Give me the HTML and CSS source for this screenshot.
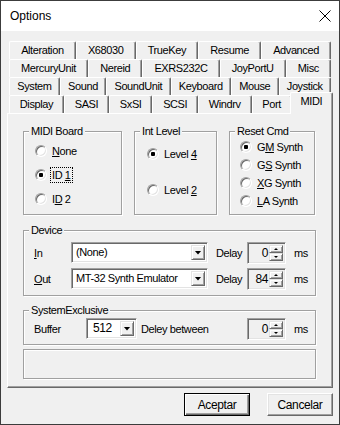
FILE: index.html
```html
<!DOCTYPE html>
<html lang="en">
<head>
    <meta charset="UTF-8">
    <title>Options</title>
    <link rel="stylesheet" href="styles.css">
</head>
<body>
    <div class="window">
        <div class="titlebar">
            <span class="title">Options</span>
            <svg class="close" width="12" height="12" viewBox="0 0 12 12">
                <path d="M0.5 0.5L11.5 11.5M11.5 0.5L0.5 11.5" stroke="#000" stroke-width="1"/>
            </svg>
        </div>

        <div class="client">
            <div class="tabs">
                <div class="tabrow">
                    <div class="tab">Alteration</div>
                    <div class="tab">X68030</div>
                    <div class="tab">TrueKey</div>
                    <div class="tab">Resume</div>
                    <div class="tab">Advanced</div>
                </div>
                <div class="tabrow">
                    <div class="tab">MercuryUnit</div>
                    <div class="tab">Nereid</div>
                    <div class="tab">EXRS232C</div>
                    <div class="tab">JoyPortU</div>
                    <div class="tab">Misc</div>
                </div>
                <div class="tabrow">
                    <div class="tab">System</div>
                    <div class="tab">Sound</div>
                    <div class="tab">SoundUnit</div>
                    <div class="tab">Keyboard</div>
                    <div class="tab">Mouse</div>
                    <div class="tab">Joystick</div>
                </div>
                <div class="tabrow">
                    <div class="tab">Display</div>
                    <div class="tab">SASI</div>
                    <div class="tab">SxSI</div>
                    <div class="tab">SCSI</div>
                    <div class="tab">Windrv</div>
                    <div class="tab">Port</div>
                    <div class="tab active">MIDI</div>
                </div>
            </div>

            <div class="panel">
                <div class="groups">
                    <fieldset class="group board">
                        <legend>MIDI Board</legend>
                        <div class="gbody">
                            <div class="opt"><span class="radio"></span><span class="opt-label"><u>N</u>one</span></div>
                            <div class="opt"><span class="radio checked"></span><span class="opt-label focus">ID <u>1</u></span></div>
                            <div class="opt"><span class="radio"></span><span class="opt-label">I<u>D</u> 2</span></div>
                        </div>
                    </fieldset>
                    <fieldset class="group level">
                        <legend>Int Level</legend>
                        <div class="gbody">
                            <div class="opt"><span class="radio checked"></span><span class="opt-label">Level <u>4</u></span></div>
                            <div class="opt"><span class="radio"></span><span class="opt-label">Level <u>2</u></span></div>
                        </div>
                    </fieldset>
                    <fieldset class="group reset">
                        <legend>Reset Cmd</legend>
                        <div class="gbody">
                            <div class="opt"><span class="radio checked"></span><span class="opt-label">G<u>M</u> Synth</span></div>
                            <div class="opt"><span class="radio"></span><span class="opt-label">G<u>S</u> Synth</span></div>
                            <div class="opt"><span class="radio"></span><span class="opt-label"><u>X</u>G Synth</span></div>
                            <div class="opt"><span class="radio"></span><span class="opt-label"><u>L</u>A Synth</span></div>
                        </div>
                    </fieldset>
                </div>

                <fieldset class="group device">
                    <legend>Device</legend>
                    <div class="gbody">
                        <div class="field-row">
                            <span class="lbl"><u>I</u>n</span>
                            <div class="combo wide">
                                <span class="combo-text">(None)</span>
                                <span class="combo-btn"><i class="arrow"></i></span>
                            </div>
                            <span class="delay">Delay</span>
                            <div class="spin">
                                <span class="spin-val">0</span>
                                <span class="spin-btns"><span class="spin-up"></span><span class="spin-down"></span></span>
                            </div>
                            <span class="unit">ms</span>
                        </div>
                        <div class="field-row">
                            <span class="lbl"><u>O</u>ut</span>
                            <div class="combo wide">
                                <span class="combo-text">MT-32 Synth Emulator</span>
                                <span class="combo-btn"><i class="arrow"></i></span>
                            </div>
                            <span class="delay">Delay</span>
                            <div class="spin">
                                <span class="spin-val">84</span>
                                <span class="spin-btns"><span class="spin-up"></span><span class="spin-down"></span></span>
                            </div>
                            <span class="unit">ms</span>
                        </div>
                    </div>
                </fieldset>

                <fieldset class="group sysex">
                    <legend>SystemExclusive</legend>
                    <div class="gbody">
                        <div class="field-row">
                            <span class="lbl buffer">Buffer</span>
                            <div class="combo small">
                                <span class="combo-text">512</span>
                                <span class="combo-btn"><i class="arrow"></i></span>
                            </div>
                            <span class="between">Deley between</span>
                            <div class="spin">
                                <span class="spin-val">0</span>
                                <span class="spin-btns"><span class="spin-up"></span><span class="spin-down"></span></span>
                            </div>
                            <span class="unit">ms</span>
                        </div>
                    </div>
                </fieldset>

                <div class="status"></div>
            </div>

            <div class="buttons">
                <div class="btn default">Aceptar</div>
                <div class="btn">Cancelar</div>
            </div>
        </div>
    </div>
</body>
</html>
```

FILE: styles.css
```css
body {
    margin: 0;
    background: #fff;
    font-family: "Liberation Sans", Arial, sans-serif;
    font-size: 11px;
    letter-spacing: -0.4px;
    color: #000;
}

.window {
    width: 340px;
    height: 425px;
    box-sizing: border-box;
    border: 1px solid #3c3c3c;
    background: #f0f0f0;
    display: flex;
    flex-direction: column;
}

.titlebar {
    height: 30px;
    background: #fff;
    display: flex;
    align-items: center;
    justify-content: space-between;
    padding: 0 8px 0 9px;
}

.title {
    font-size: 12px;
    letter-spacing: 0;
}

.client {
    flex: 1;
    padding: 10px 6px 0;
    display: flex;
    flex-direction: column;
}

/* tabs */
.tabs {
    margin: 0 2px;
}

.tabrow {
    display: flex;
    height: 18px;
}

.tab {
    flex: 1 1 auto;
    padding: 0 4px;
    border: 1px solid;
    border-bottom: 0;
    border-color: #fff #696969 #696969 #fff;
    box-shadow: inset -1px 0 #a0a0a0;
    border-radius: 2px 2px 0 0;
    background: #f0f0f0;
    line-height: 17px;
    text-align: center;
    white-space: nowrap;
}

.tab.active {
    position: relative;
    z-index: 1;
    align-self: flex-start;
    height: 21px;
    margin: -3px -2px 0 -2px;
    line-height: 16px;
}

/* panel */
.panel {
    height: 275px;
    box-sizing: border-box;
    border: 1px solid;
    border-color: #fff #696969 #696969 #fff;
    box-shadow: inset -1px -1px #a0a0a0;
    padding: 11px 16px 0 15px;
    display: flex;
    flex-direction: column;
}

.groups {
    display: flex;
    gap: 12px;
}

fieldset.group {
    margin: 0;
    padding: 0;
    min-width: 0;
    box-sizing: border-box;
    border: 1px solid #a0a0a0;
    box-shadow: inset 1px 1px #fff, 1px 1px #fff;
}

legend {
    margin-left: 5px;
    padding: 0 2px;
    line-height: 13px;
    background: #f0f0f0;
}

.board { width: 99px; }
.level { width: 83px; }
.reset { width: 86px; }

.gbody {
    display: flex;
    flex-direction: column;
}

.board .gbody {
    padding: 5px 0 7px 11px;
    gap: 8px;
}

.level .gbody {
    padding: 8px 0 0 12px;
    gap: 20px;
}

.reset .gbody {
    padding: 1px 0 5px 10px;
    gap: 2px;
}

.opt {
    display: flex;
    align-items: center;
    height: 16px;
}

.radio {
    width: 12px;
    height: 12px;
    box-sizing: border-box;
    border-radius: 50%;
    border: 1px solid;
    border-color: #a0a0a0 #fff #fff #a0a0a0;
    box-shadow: inset 1px 1px #696969, inset -1px -1px #e3e3e3;
    background: #fff;
    flex: none;
}

.radio.checked {
    background: radial-gradient(circle, #000 0, #000 2px, #fff 2.5px);
}

.opt-label {
    margin-left: 5px;
    line-height: 14px;
}

.opt-label.focus {
    margin-left: 3px;
    padding: 0 1px;
    border: 1px dotted #000;
}

/* device + sysex */
fieldset.device {
    margin-top: 9px;
}

.device .gbody {
    padding: 5px 0 6px 10px;
    gap: 5px;
}

fieldset.sysex {
    margin-top: 8px;
}

.sysex .gbody {
    padding: 1px 0 5px 10px;
}

.field-row {
    display: flex;
    align-items: center;
    height: 21px;
}

.lbl {
    width: 37px;
}

.lbl.buffer {
    width: 52px;
}

.combo {
    display: flex;
    box-sizing: border-box;
    height: 21px;
    padding: 2px;
    border: 1px solid;
    border-color: #a0a0a0 #fff #fff #a0a0a0;
    box-shadow: inset 1px 1px #696969, inset -1px -1px #e3e3e3;
    background: #fff;
}

.combo.wide { width: 137px; }
.combo.small { width: 51px; }

.combo-text {
    flex: 1;
    padding-left: 2px;
    line-height: 15px;
    white-space: nowrap;
    overflow: hidden;
}

.combo.small .combo-text {
    padding-left: 4px;
    font-size: 12px;
}

.combo-btn,
.spin-up,
.spin-down {
    box-sizing: border-box;
    border: 1px solid;
    border-color: #e3e3e3 #696969 #696969 #e3e3e3;
    box-shadow: inset 1px 1px #fff, inset -1px -1px #a0a0a0;
    background: #f0f0f0;
    display: flex;
    align-items: center;
    justify-content: center;
}

.combo-btn {
    width: 14px;
}

.arrow {
    width: 7px;
    height: 4px;
    background: #000;
    clip-path: polygon(0 0, 100% 0, 50% 100%);
}

.delay {
    margin-left: 8px;
    width: 31px;
}

.between {
    margin-left: 4px;
    width: 106px;
}

.spin {
    display: flex;
    box-sizing: border-box;
    width: 39px;
    height: 22px;
    padding: 2px;
    border: 1px solid;
    border-color: #a0a0a0 #fff #fff #a0a0a0;
    box-shadow: inset 1px 1px #696969, inset -1px -1px #e3e3e3;
    background: #f0f0f0;
}

.spin-val {
    flex: 1;
    text-align: right;
    line-height: 16px;
    padding-right: 1px;
    font-size: 12px;
}

.spin-btns {
    width: 14px;
    display: flex;
    flex-direction: column;
}

.spin-up,
.spin-down {
    flex: 1;
}

.spin-up::after,
.spin-down::after {
    content: "";
    border-left: 2px solid transparent;
    border-right: 2px solid transparent;
}

.spin-up::after {
    border-bottom: 2px solid #000;
}

.spin-down::after {
    border-top: 2px solid #000;
}

.unit {
    margin-left: 8px;
}

.status {
    margin-top: 4px;
    height: 28px;
    border: 1px solid #a0a0a0;
    box-shadow: inset 1px 1px #fff, 1px 1px #fff;
}

/* dialog buttons */
.buttons {
    display: flex;
    justify-content: flex-end;
    gap: 17px;
    margin-top: 5px;
}

.btn {
    width: 66px;
    height: 23px;
    box-sizing: border-box;
    border: 1px solid;
    border-color: #fff #696969 #696969 #fff;
    box-shadow: inset -1px -1px #a0a0a0, inset 1px 1px #e3e3e3;
    display: flex;
    align-items: center;
    justify-content: center;
    font-size: 12px;
}

.btn.default {
    border-color: #000;
    box-shadow: inset 1px 1px #fff, inset -1px -1px #696969, inset -2px -2px #a0a0a0;
}
```
